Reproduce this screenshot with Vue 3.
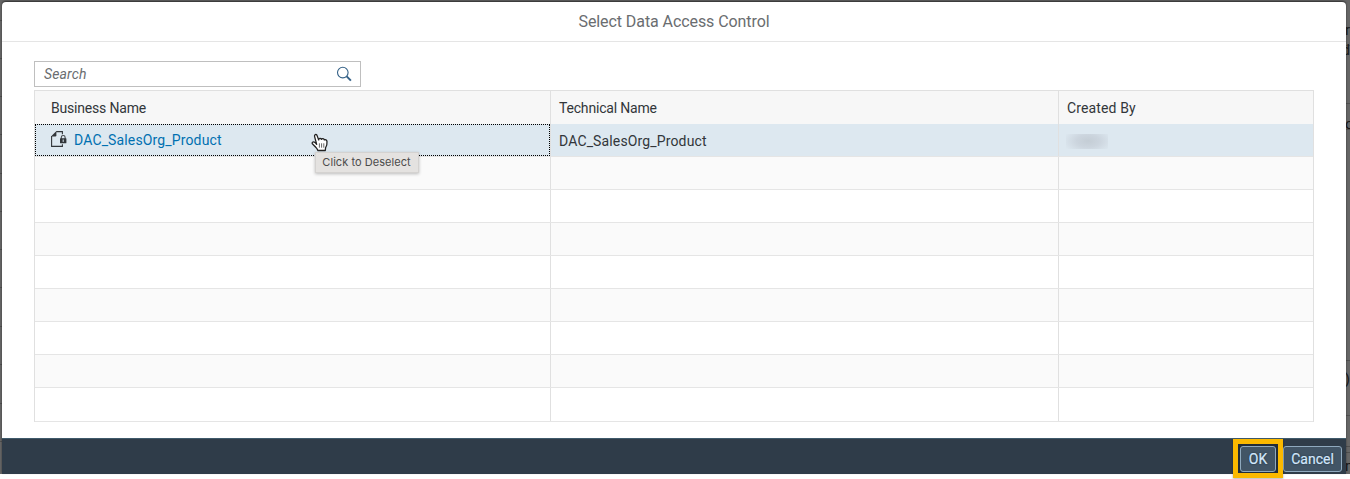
<script setup>
const emptyRows = 8
const marks = [
  { t: 'r', y: 22, whole: true },
  { t: 'd', y: 42, whole: true },
  { t: 'o', y: 116 },
  { t: ')', y: 371, whole: true },
  { t: 'm', y: 458 },
]
const ticks = [20, 58, 96, 134, 173, 211, 249, 287, 326, 364, 403, 441]
const rightTicks = [45, 103, 129, 360, 415, 446, 452]
</script>

<template>
  <div class="screen">
    <div class="backdrop">
      <i v-for="y in ticks" :key="'l' + y" class="tick left" :style="{ top: y + 'px' }"></i>
      <i v-for="y in rightTicks" :key="'r' + y" class="tick right" :style="{ top: y + 'px' }"></i>
      <span v-for="m in marks" :key="m.y" class="mark" :class="{ whole: m.whole }" :style="{ top: m.y + 'px' }">{{ m.t }}</span>
    </div>
    <section class="dialog">
      <header class="title"><span>Select Data Access Control</span></header>
      <main class="body">
        <div class="search">
          <span class="placeholder">Search</span>
          <svg width="16" height="16" viewBox="0 0 16 16" fill="none" stroke="#346187">
            <circle cx="6.8" cy="6.6" r="5.3" stroke-width="1.1" />
            <path d="M10.7 10.4l4.2 4.2" stroke-width="2" />
          </svg>
        </div>
        <div class="table">
          <div class="row head">
            <div class="cell first"><span class="t-name">Business Name</span></div>
            <div class="cell"><span class="t-name">Technical Name</span></div>
            <div class="cell"><span class="t-wide">Created By</span></div>
          </div>
          <div class="row selected">
            <div class="cell first focus">
              <svg class="doc" width="17" height="17" viewBox="0 0 17 17">
                <path d="M5.2 .6H11.4V3.2M11.4 13.2V15.4H.6V5" fill="none" stroke="#32363a" stroke-width="1.1" />
                <path d="M0 5.4L5.4 0V4.2Q5.4 5.4 4.2 5.4Z" fill="#32363a" />
                <path d="M10.3 8V6.3Q10.3 4.5 12.2 4.5T14.1 6.3V8" fill="none" stroke="#45494d" stroke-width="1.1" />
                <rect x="9" y="7.3" width="6.4" height="5" rx=".5" fill="#32363a" />
                <path d="M12.2 8.5v2.4" stroke="#dde8f0" stroke-width="1" />
              </svg>
              <a class="t-wide">DAC_SalesOrg_Product</a>
            </div>
            <div class="cell"><span class="t-wide">DAC_SalesOrg_Product</span></div>
            <div class="cell redacted-cell"><div class="redacted"></div></div>
          </div>
          <div v-for="n in emptyRows" :key="n" class="row" :class="{ alt: n % 2 === 1 }">
            <div class="cell first"></div>
            <div class="cell"></div>
            <div class="cell"></div>
          </div>
        </div>
      </main>
      <footer class="footer">
        <div class="highlight"><button class="btn ok"><span>OK</span></button></div>
        <button class="btn cancel"><span>Cancel</span></button>
      </footer>
    </section>

    <div class="tooltip"><span>Click to Deselect</span></div>
    <svg class="pointer" width="17" height="19" viewBox="0 0 17 19">
      <path d="M5.7 11.3L3.6 3.6C3 1.4 5.4 .6 6.1 2.6L7.7 6.9C7.7 5.1 9.9 4.9 10.4 6.4C11 5.2 12.9 5.3 13.3 6.9C14.3 6.2 15.9 7 16 8.6C16.3 11.7 15.5 13 14.6 14.6L14.3 17.5H6.8C6.5 15.6 4.2 13.6 1.8 11.3C.1 9.6 1.9 7.9 4.4 9.8Z" fill="#fff" stroke="#222" stroke-width="1.3" stroke-linejoin="round" />
      <path d="M8.4 10.3v4.4M10.6 10.3v4.4M12.8 10.3v4.4" stroke="#666" stroke-width="1" />
    </svg>
  </div>
</template>

<style>
body { margin: 0; background: #fff; overflow: hidden; }
</style>

<style scoped>
.screen {
  position: relative;
  width: 1350px;
  height: 479px;
  font-family: Roboto, "Liberation Sans", sans-serif;
  font-size: 14px;
  color: #32363a;
}
.screen span, .screen a { white-space: nowrap; }
.backdrop {
  position: absolute;
  inset: 0 0 5px 0;
  background: #666;
  overflow: hidden;
}
.tick { position: absolute; height: 1px; background: #505050; }
.left { left: 0; width: 2px; }
.right { left: 1346px; width: 4px; }
.mark { position: absolute; left: 1345px; line-height: 16px; font-size: 15px; color: #181818; }
.mark.whole { left: auto; right: 0; }
.dialog {
  position: absolute;
  left: 2px;
  top: 2px;
  width: 1344px;
  height: 472px;
  display: flex;
  flex-direction: column;
  background: #fff;
  border-radius: 4px 4px 0 0;
  box-shadow: 0 -1px 2px rgba(0, 0, 0, .55);
}
.title {
  box-sizing: border-box;
  height: 40px;
  border-bottom: 1px solid #e5e5e5;
  text-align: center;
  font-size: 16px;
  line-height: 39px;
  color: #6a6d70;
}
.title span { letter-spacing: -.08px; }
.body { flex: 1; padding: 19px 32px 0; }
.search {
  box-sizing: border-box;
  width: 327px;
  height: 26px;
  margin-bottom: 3px;
  padding: 0 8px 0 9px;
  border: 1px solid #bfbfbf;
  display: flex;
  align-items: center;
  justify-content: space-between;
}
.placeholder { font-style: italic; color: #6a6d70; letter-spacing: .15px; }
.table {
  box-sizing: border-box;
  width: 1280px;
  border: 1px solid #e0e0e0;
  border-bottom: 0;
}
.row {
  box-sizing: border-box;
  height: 33px;
  display: grid;
  grid-template-columns: 516px 508px 254px;
  border-bottom: 1px solid #e5e5e5;
}
.row:last-child { height: 34px; }
.alt { background: #fafafa; }
.head { background: #f7f7f7; border-bottom: 0; }
.cell {
  box-sizing: border-box;
  display: flex;
  align-items: center;
  padding-left: 8px;
  padding-top: 1px;
  border-right: 1px solid #e0e0e0;
}
.cell:last-child { border-right: 0; }
.cell.first { padding-left: 16px; }
.selected { background: #dde8f0; }
.cell.focus {
  border: 1px dotted #000;
  padding: 0 0 1px 15px;
  margin-right: 1px;
  box-shadow: 1px 0 0 #e0e0e0;
}
.t-name { letter-spacing: -.19px; }
.t-wide { letter-spacing: .14px; }
.focus a { color: #0070b1; margin-left: 6px; }
.cell.redacted-cell { padding: 2px 0 0 7px; }
.redacted {
  width: 42px;
  height: 15px;
  background: radial-gradient(ellipse 26px 14px at 22px 7px, #c4cdd5 0%, #ccd5de 45%, #dde8f0 100%);
}
.footer {
  box-sizing: border-box;
  height: 36px;
  border-top: 1px solid #3f5a6b;
  background: #2f3c49;
  display: flex;
  justify-content: flex-end;
  padding-right: 4px;
}
.highlight {
  box-sizing: border-box;
  width: 50px;
  height: 39px;
  border: 5px solid #fbb900;
  padding: 2px;
  background: #212c38;
  position: relative;
  z-index: 1;
  box-shadow: 0 1px 2px rgba(0, 0, 0, .3);
}
.btn {
  box-sizing: border-box;
  height: 26px;
  padding: 0;
  border: 1px solid #8fa9be;
  border-radius: 3px;
  background: #425566;
  color: #d3e8fd;
  font: 14px Roboto, sans-serif;
  text-shadow: 0 0 2px #1d2a36;
}
.btn span { -webkit-text-stroke: .2px #d3e8fd; }
.ok { display: block; width: 36px; }
.cancel { width: 59px; margin-top: 7px; }
.tooltip {
  position: absolute;
  left: 315px;
  top: 152px;
  width: 104px;
  height: 21px;
  box-sizing: border-box;
  padding-right: 1px;
  background: #e4e2e0;
  border: 1px solid #d4d2d0;
  box-shadow: 0 1px 3px rgba(0, 0, 0, .25);
  font: 11px/19px Inter, sans-serif;
  letter-spacing: .05px;
  text-align: center;
  color: #4b4b4b;
}
.pointer { position: absolute; left: 311px; top: 133px; }
</style>
